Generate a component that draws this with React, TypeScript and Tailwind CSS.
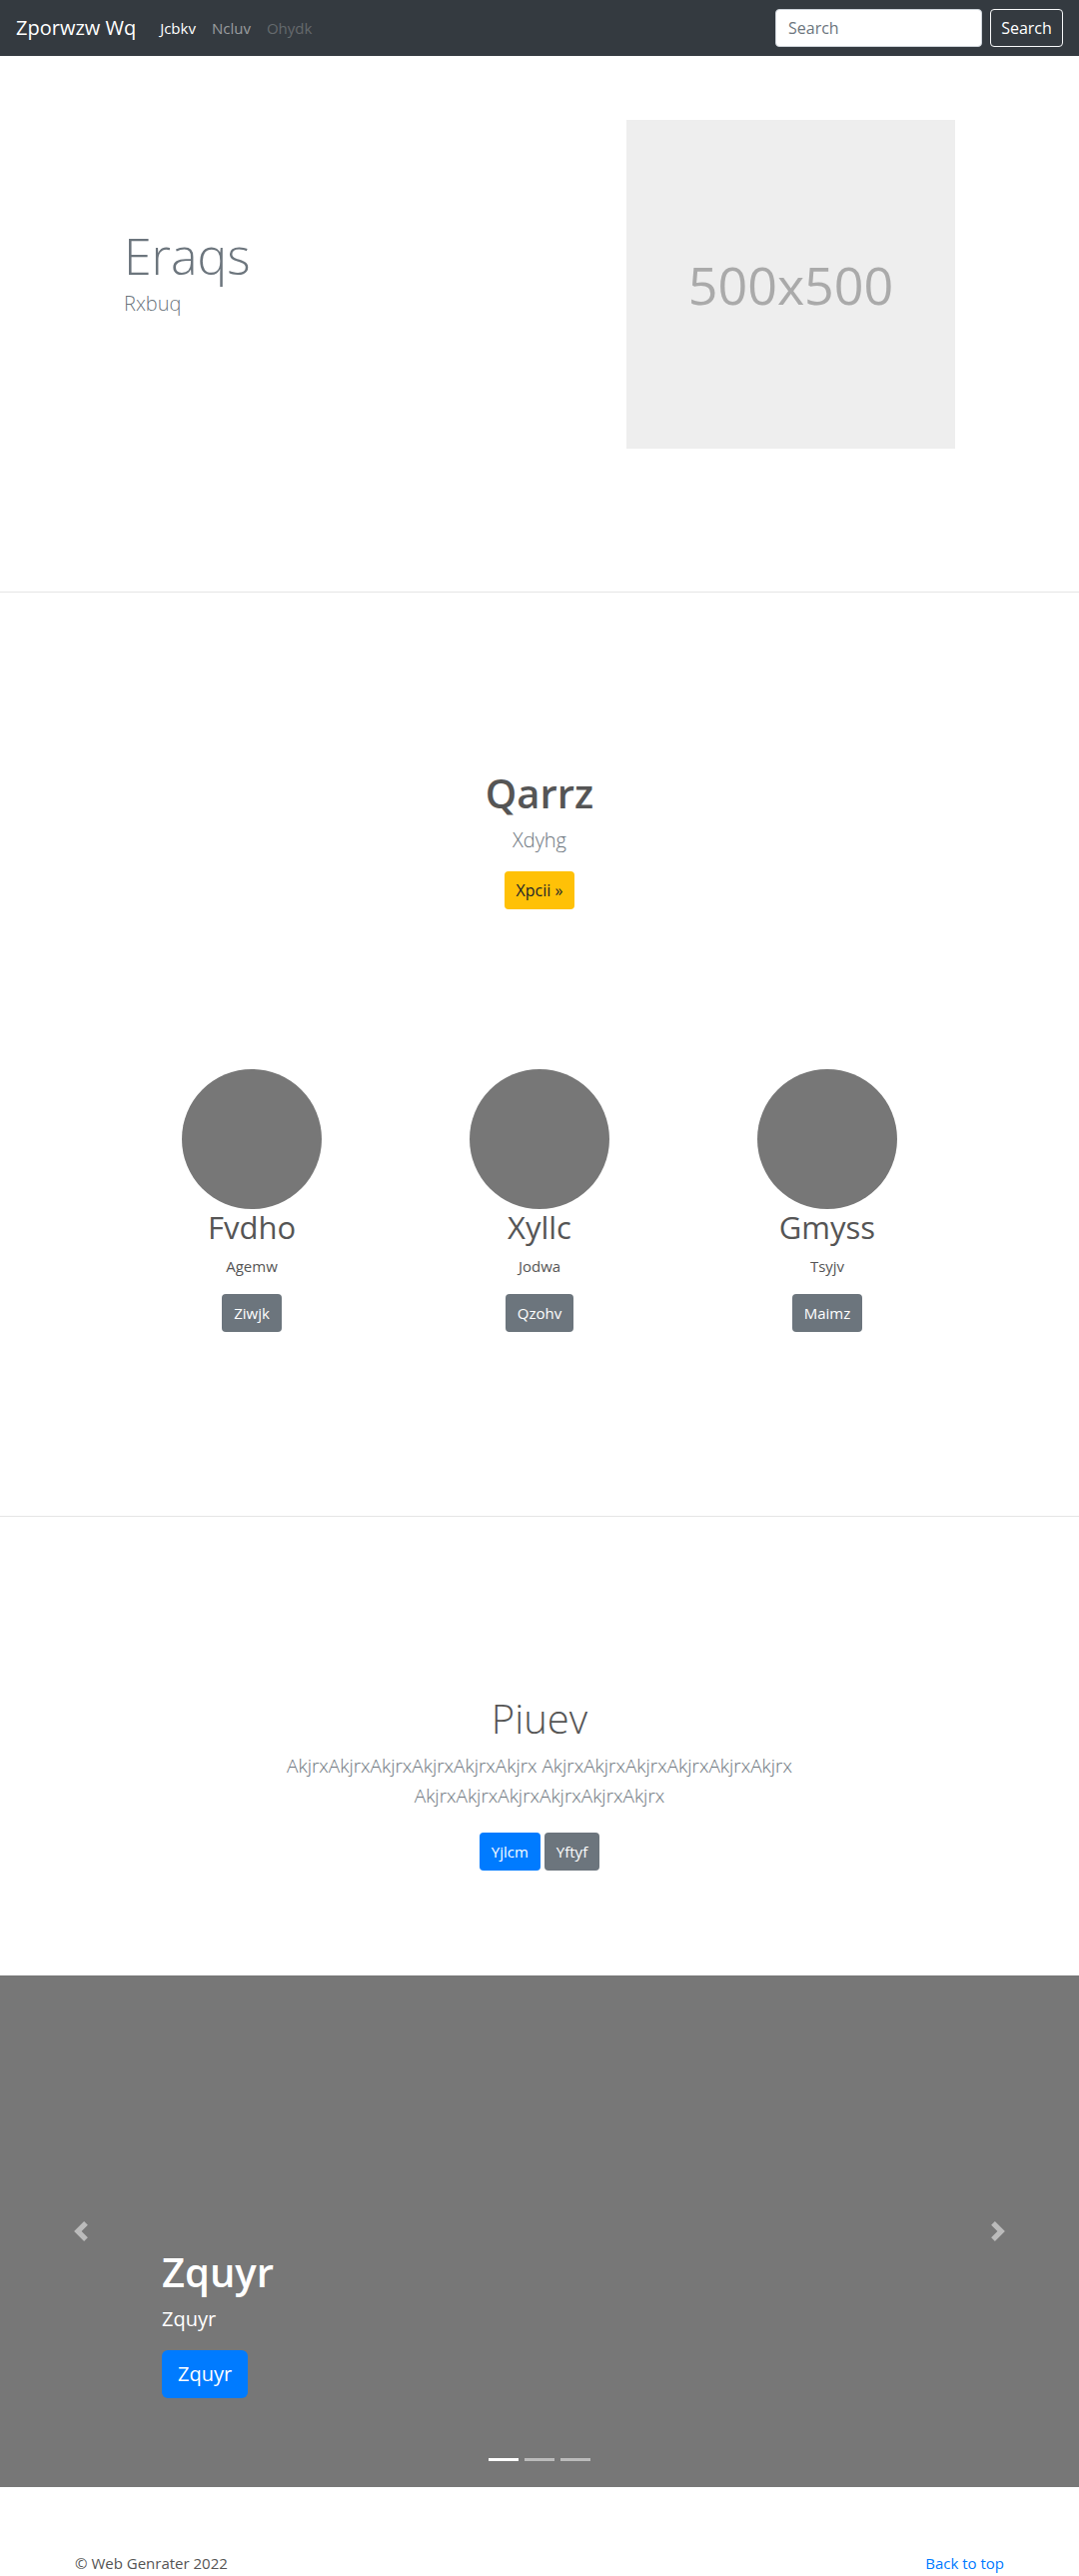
import React from 'react';

const font = { fontFamily: '"Open Sans", "Noto Sans", sans-serif' };

const team = [
  { name: 'Fvdho', sub: 'Agemw', btn: 'Ziwjk' },
  { name: 'Xyllc', sub: 'Jodwa', btn: 'Qzohv' },
  { name: 'Gmyss', sub: 'Tsyjv', btn: 'Maimz' },
];

const Chevron: React.FC<{ dir: 'left' | 'right' }> = ({ dir }) => (
  <svg width="20" height="20" viewBox="0 0 8 8" className="opacity-50">
    {dir === 'left' ? (
      <path fill="#fff" d="M5.25 0l-4 4 4 4 1.5-1.5L4.25 4l2.5-2.5L5.25 0z" />
    ) : (
      <path fill="#fff" d="M2.75 0l-1.5 1.5L3.75 4l-2.5 2.5L2.75 8l4-4-4-4z" />
    )}
  </svg>
);

const Navbar = () => (
  <nav className="h-14 bg-[#343a40] flex items-center px-4">
    <span className="text-xl text-white mr-4">Zporwzw Wq</span>
    <div className="flex items-center text-[15px]">
      <a className="px-2 text-white">Jcbkv</a>
      <a className="px-2 text-white/50">Ncluv</a>
      <a className="px-2 text-white/25">Ohydk</a>
    </div>
    <div className="ml-auto flex items-center">
      <input
        placeholder="Search"
        className="w-[207px] h-[38px] rounded bg-white border border-[#ced4da] px-3 text-base text-[#495057] placeholder:text-[#6c757d] mr-2 outline-none"
      />
      <button className="w-[73px] h-[38px] rounded border border-[#f8f9fa] text-white text-base">
        Search
      </button>
    </div>
  </nav>
);

const Hero = () => (
  <section className="border-b border-[#e5e5e5] pt-16 pb-[143px]">
    <div className="w-[960px] mx-auto grid grid-cols-2">
      <div className="pl-[64px] pt-[106px]">
        <h1 className="text-[50px] leading-[1.2] font-light text-[#6c757d]">Eraqs</h1>
        <p className="mt-[3px] text-xl leading-[30px] font-light text-[#6c757d]">Rxbuq</p>
      </div>
      <div className="pl-[87px]">
        <div className="w-[329px] h-[329px] bg-[#eeeeee] flex items-center justify-center">
          <span className="text-[52px] text-[#aaaaaa]">500x500</span>
        </div>
      </div>
    </div>
  </section>
);

const Marketing = () => (
  <section className="border-b border-[#e5e5e5] pt-[177px] pb-[184px] text-center">
    <h1 className="text-[40px] leading-[1.2] font-semibold text-[#555]">Qarrz</h1>
    <p className="mt-2 text-xl leading-[30px] font-light text-[#6c757d]">Xdyhg</p>
    <button className="mt-4 h-[38px] px-3 rounded bg-[#ffc107] text-[#212529] text-base">
      Xpcii »
    </button>
    <div className="mt-[160px] w-[864px] mx-auto grid grid-cols-3">
      {team.map((t) => (
        <div key={t.name} className="flex flex-col items-center">
          <div className="w-[140px] h-[140px] rounded-full bg-[#777]" />
          <h2 className="text-[31px] leading-[1.2] text-[#555]">{t.name}</h2>
          <p className="mt-2 text-[15px] leading-6 text-[#555]">{t.sub}</p>
          <button className="mt-4 h-[38px] px-3 rounded bg-[#6c757d] text-white text-[15px]">
            {t.btn}
          </button>
        </div>
      ))}
    </div>
  </section>
);

const Album = () => (
  <section className="pt-[178px] pb-[105px] text-center">
    <h1 className="text-[40px] leading-[1.2] font-light text-[#555]">Piuev</h1>
    <p className="mt-2 max-w-[610px] mx-auto text-[19px] leading-[30px] font-light text-[#6c757d]">
      AkjrxAkjrxAkjrxAkjrxAkjrxAkjrx AkjrxAkjrxAkjrxAkjrxAkjrxAkjrx AkjrxAkjrxAkjrxAkjrxAkjrxAkjrx
    </p>
    <div className="mt-[22px] flex justify-center gap-1">
      <button className="h-[38px] px-3 rounded bg-[#007bff] text-white text-[15px]">Yjlcm</button>
      <button className="h-[38px] px-3 rounded bg-[#6c757d] text-white text-[15px]">Yftyf</button>
    </div>
  </section>
);

const Carousel = () => (
  <div className="relative h-[512px] bg-[#777] mb-16">
    <div className="absolute left-0 top-0 h-full w-[162px] flex items-center justify-center">
      <Chevron dir="left" />
    </div>
    <div className="absolute right-0 top-0 h-full w-[162px] flex items-center justify-center">
      <Chevron dir="right" />
    </div>
    <div className="absolute left-[162px] right-[162px] top-[273px] text-white">
      <h1 className="text-[40px] leading-[1.2] font-semibold">Zquyr</h1>
      <p className="mt-2 text-xl leading-[30px]">Zquyr</p>
      <button className="mt-4 h-12 px-4 rounded-md bg-[#007bff] text-white text-xl">Zquyr</button>
    </div>
    <div className="absolute bottom-[26px] left-0 right-0 flex justify-center gap-[6px]">
      <span className="w-[30px] h-[3px] bg-white" />
      <span className="w-[30px] h-[3px] bg-white/50" />
      <span className="w-[30px] h-[3px] bg-white/50" />
    </div>
  </div>
);

const Footer = () => (
  <footer className="w-[930px] mx-auto flex justify-between text-[15px] leading-6 pb-4">
    <p className="text-[#555]">© Web Genrater 2022</p>
    <a className="text-[#007bff]">Back to top</a>
  </footer>
);

export default function App() {
  return (
    <div style={font} className="bg-white min-h-screen">
      <Navbar />
      <Hero />
      <Marketing />
      <Album />
      <Carousel />
      <Footer />
    </div>
  );
}
